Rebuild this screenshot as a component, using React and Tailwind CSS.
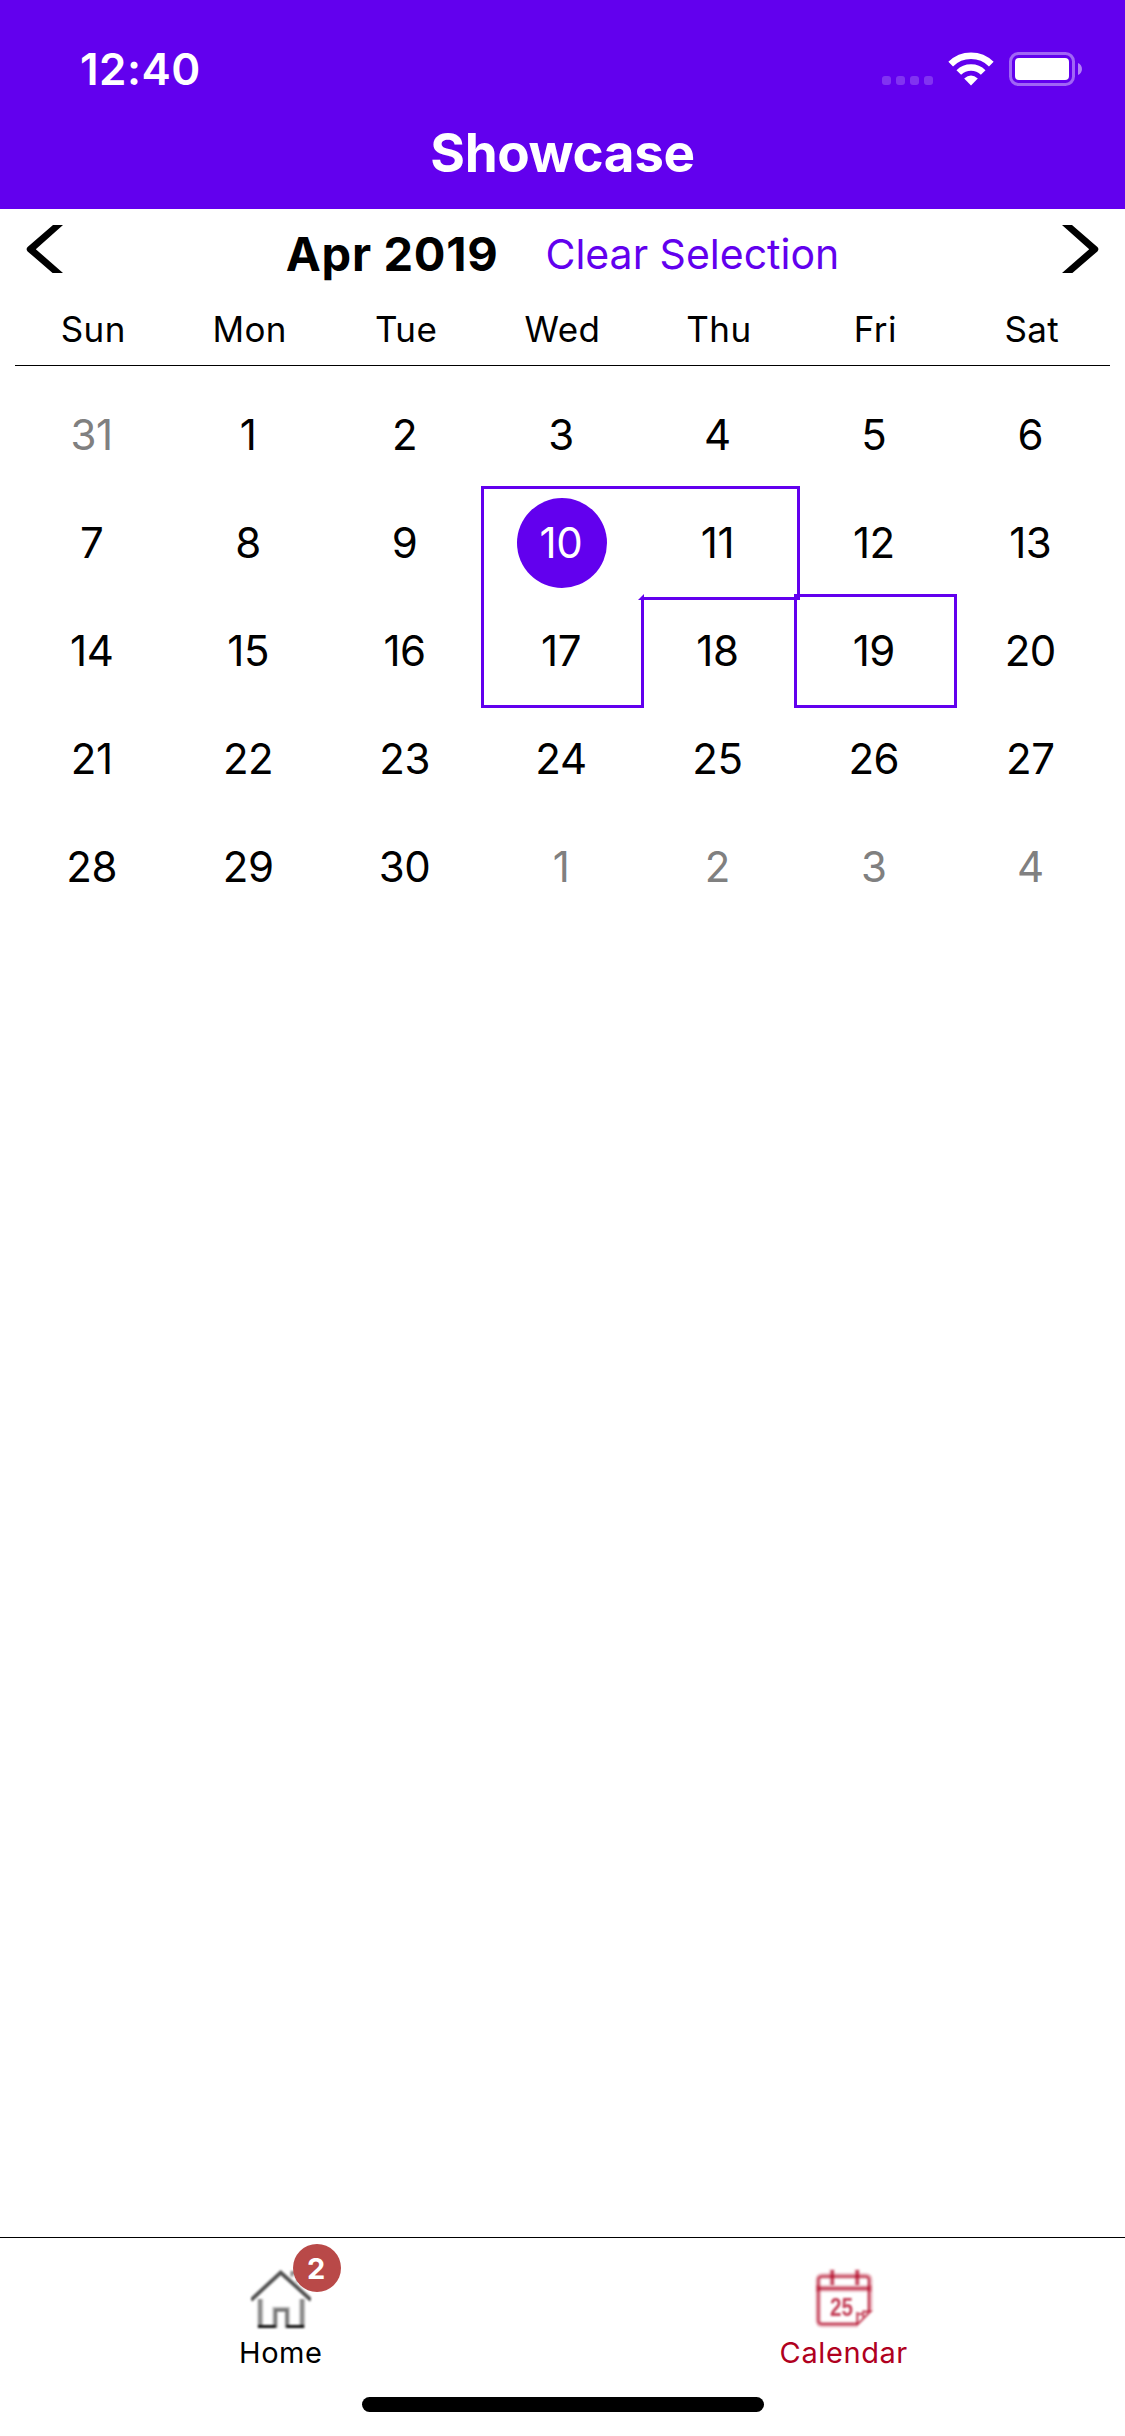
const WEEKDAYS = ["Sun", "Mon", "Tue", "Wed", "Thu", "Fri", "Sat"];

const WEEKS = [
  [31, 1, 2, 3, 4, 5, 6],
  [7, 8, 9, 10, 11, 12, 13],
  [14, 15, 16, 17, 18, 19, 20],
  [21, 22, 23, 24, 25, 26, 27],
  [28, 29, 30, 1, 2, 3, 4],
];

// Sides of the outline drawn around each selected day of the month.
const SELECTED = {
  10: "border-t-[#6200ee] border-l-[#6200ee]",
  11: "border-t-[#6200ee] border-r-[#6200ee] border-b-[#6200ee]",
  17: "border-l-[#6200ee] border-r-[#6200ee] border-b-[#6200ee]",
  19: "border-t-[#6200ee] border-l-[#6200ee] border-r-[#6200ee] border-b-[#6200ee]",
};

function WifiIcon() {
  return (
    <svg className="h-[34px] w-[46px]" viewBox="0 0 46 34" fill="none">
      <path d="M2.7 12.1A28.8 28.8 0 0 1 43.3 12.1" stroke="#fff" strokeWidth="6.6" />
      <path d="M10.8 20.5A17.4 17.4 0 0 1 35.2 20.5" stroke="#fff" strokeWidth="6.6" />
      <path d="M16.2 26.4Q23 20.6 29.8 26.4L23 33.4Z" fill="#fff" />
    </svg>
  );
}

function BatteryIcon() {
  return (
    <svg className="h-[34px] w-[73px]" viewBox="0 0 73 34" fill="none">
      <rect x="1.5" y="1.5" width="63" height="31" rx="8" stroke="#fff" strokeOpacity="0.4" strokeWidth="3" />
      <rect x="6" y="6" width="54" height="22" rx="4" fill="#fff" />
      <path d="M69 11C74.3 13 74.3 21 69 23Z" fill="#fff" fillOpacity="0.5" />
    </svg>
  );
}

function StatusBar() {
  return (
    <div className="flex h-[138px] items-center justify-between pr-[43px] pl-[80px]">
      <span className="text-[44px] font-semibold tracking-[0.5px]">12:40</span>
      <div className="flex items-center">
        <div className="mr-[15px] flex gap-[5px] pt-[23px]">
          {[0, 1, 2, 3].map((i) => (
            <span key={i} className="size-[9px] rounded-[3px] bg-white/20" />
          ))}
        </div>
        <WifiIcon />
        <div className="ml-[15px]">
          <BatteryIcon />
        </div>
      </div>
    </div>
  );
}

function Chevron({ flip }) {
  return (
    <svg className={flip ? "h-12 w-[37px] -scale-x-100" : "h-12 w-[37px]"} viewBox="0 0 37 48">
      <path d="M27 0H37L9.8 24.2L37 48H26.6L1.6 26.4Q-0.4 24.2 1.6 22Z" fill="#000" />
    </svg>
  );
}

function Day({ day, outside, today, outline }) {
  return (
    <div className="relative flex h-[108px] items-center justify-center">
      {outline && <div className={"absolute -inset-[3px] border-[3px] border-transparent " + outline} />}
      <div
        className={
          "flex size-[90px] items-center justify-center rounded-full pr-[3px] pb-[2px] text-[42px] tracking-[-0.4px] " +
          (today ? "bg-[#6200ee] text-white" : outside ? "text-[#808080]" : "text-black")
        }
      >
        {day}
      </div>
    </div>
  );
}

function HomeIcon() {
  return (
    <svg className="size-[60px] blur-[0.8px]" viewBox="0 0 60 60" fill="none">
      <path d="M41 8.5V4.5H47V14" stroke="#888" strokeWidth="3" />
      <path d="M0 32L29.7 4.5L60 32" stroke="#505050" strokeWidth="3.8" />
      <path d="M9.3 31V60M51.2 31V60" stroke="#b4b4b4" strokeWidth="5.6" />
      <path d="M9 31V60M51 31V60" stroke="#808080" strokeWidth="2.4" />
      <path d="M24 60V41.5H36.2V60" stroke="#b4b4b4" strokeWidth="5" />
      <path d="M24.5 60V42H36V60" stroke="#6c6c6c" strokeWidth="2.4" />
      <path d="M7 58.5H24.5M35.5 58.5H53" stroke="#111" strokeWidth="3.2" />
    </svg>
  );
}

function CalendarIcon() {
  return (
    <svg className="size-[60px] overflow-visible blur-[0.9px]" viewBox="0 0 60 60" fill="none" stroke="#b00020">
      <g strokeOpacity="0.3">
        <path d="M44 56.5H8.5Q4.3 56.5 4.3 52.5V12Q4.3 8 8.5 8H51.5Q55.7 8 55.7 12V44" strokeWidth="5.5" />
        <path d="M2 20.5H58" strokeWidth="6.5" />
        <path d="M18 1.5V17M43.2 1.5V17" strokeWidth="5.4" />
      </g>
      <g strokeOpacity="0.65">
        <path d="M44 56H8.5Q4.3 56 4.3 52.5V12Q4.3 8.5 8.5 8.5H51.5Q55 8.5 55 12V44" strokeWidth="2" />
        <path d="M4 20.5H56" strokeWidth="2.5" />
        <path d="M18.3 2V17M43.2 2V17" strokeWidth="2.6" />
        <path d="M43.3 56.5V45.5Q49 47.5 49.5 43.5L56 43.8L43.5 56.5M49.5 50.5L48.8 45" strokeWidth="2.4" />
      </g>
      <text
        x="16"
        y="47.5"
        textLength="23"
        lengthAdjust="spacingAndGlyphs"
        className="font-['Liberation_Sans'] text-[25px] font-bold"
        fill="#b00020"
        fillOpacity="0.75"
        stroke="none"
      >
        25
      </text>
    </svg>
  );
}

function Tab({ icon, label, badge, active }) {
  return (
    <div className="flex flex-1 flex-col items-center pt-[30px]">
      <div className="relative">
        {icon}
        {badge && (
          <span className="absolute -top-6 left-[42px] flex size-12 items-center justify-center rounded-full bg-[#b94948] pr-[2px] text-[29px] leading-none font-bold text-white">
            {badge}
          </span>
        )}
      </div>
      <span
        className={
          "mt-[5px] text-[29px] leading-[40px] " +
          (active ? "tracking-[0.6px] text-[#b00020]" : "pr-[1px] tracking-[0.5px] text-black")
        }
      >
        {label}
      </span>
    </div>
  );
}

export default function App() {
  return (
    <div className="flex h-[2436px] w-[1125px] flex-col bg-white font-['Inter',sans-serif] text-black">
      <header className="h-[209px] bg-[#6200ee] text-white">
        <StatusBar />
        <h1 className="-mt-4 text-center text-[53px] leading-[62px] font-bold tracking-[-0.4px]">Showcase</h1>
      </header>

      <main className="flex-1 px-[15px]">
        <div className="flex h-[91px] items-center justify-between px-[11px]">
          <div className="pb-[11px]">
            <Chevron />
          </div>
          <div className="flex items-center gap-[47px]">
            <h2 className="text-[47px] font-bold tracking-[0.7px]">Apr 2019</h2>
            <button className="text-[41px] text-[#6200ee]">Clear Selection</button>
          </div>
          <div className="pb-[11px]">
            <Chevron flip />
          </div>
        </div>

        <div className="grid h-[66px] grid-cols-7 items-center border-b border-black pb-[7px] text-center text-[35px] tracking-[0.4px]">
          {WEEKDAYS.map((d) => (
            <div key={d}>{d}</div>
          ))}
        </div>

        <div className="grid grid-cols-7 pt-[15px]">
          {WEEKS.map((week, w) =>
            week.map((day, d) => {
              const outside = (w === 0 && day > 20) || (w === 4 && day < 20);
              return (
                <Day
                  key={`${w}-${d}`}
                  day={day}
                  outside={outside}
                  today={!outside && day === 10}
                  outline={outside ? null : SELECTED[day]}
                />
              );
            }),
          )}
        </div>
      </main>

      <footer className="flex h-[199px] flex-col border-t border-black">
        <div className="flex h-[159px]">
          <Tab icon={<HomeIcon />} label="Home" badge="2" />
          <Tab icon={<CalendarIcon />} label="Calendar" active />
        </div>
        <div className="mx-auto h-[15px] w-[402px] rounded-full bg-black" />
      </footer>
    </div>
  );
}
